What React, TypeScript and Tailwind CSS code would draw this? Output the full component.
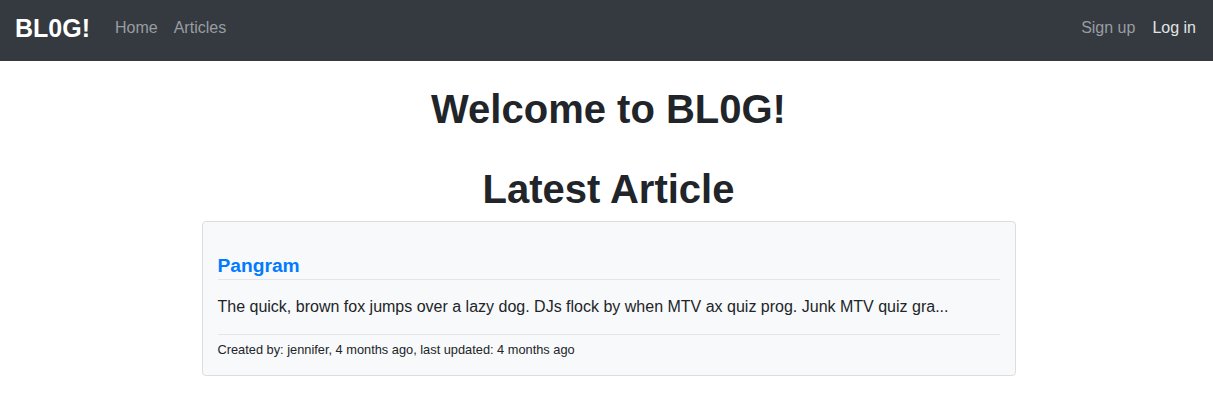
const article = {
  title: "Pangram",
  excerpt:
    "The quick, brown fox jumps over a lazy dog. DJs flock by when MTV ax quiz prog. Junk MTV quiz gra...",
  author: "jennifer",
  created: "4 months ago",
  updated: "4 months ago",
};

const Navbar = () => {
  return (
    <nav className="h-[61px] bg-[#343a40] flex items-center justify-between pl-[15px] pr-[17px] pb-[5px]">
      <div className="flex items-center">
        <a href="#" className="text-white font-bold text-[25px] leading-none mr-[25px]">BL0G!</a>
        <div className="flex items-center gap-4 text-[16px] text-[#9a9da0]">
          <a href="#">Home</a>
          <a href="#">Articles</a>
        </div>
      </div>
      <div className="flex items-center gap-[17px] text-[16px]">
        <a href="#" className="text-[#9a9da0]">Sign up</a>
        <a href="#" className="text-[#e3e4e5]">Log in</a>
      </div>
    </nav>
  );
};

const ArticleCard = () => {
  return (
    <div className="w-[814px] mx-auto bg-[#f8f9fa] border border-[#dcdddf] rounded-[4px] px-[15px] pt-[32px] pb-[16px]">
      <h5 className="text-[19.2px] leading-[24px] font-bold text-[#007bff] pb-[1px] border-b border-[#e4e5e6]">
        <a href="#">{article.title}</a>
      </h5>
      <p className="text-[16px] leading-[24px] mt-[15px] mb-[15px]">{article.excerpt}</p>
      <div className="border-t border-[#e4e5e6] pt-[5px]">
        <small className="text-[12.8px] leading-[19px] block">
          Created by: {article.author}, {article.created}, last updated: {article.updated}
        </small>
      </div>
    </div>
  );
};

export default function App() {
  return (
    <div className="min-h-[409px] bg-white text-[#212529]" style={{ fontFamily: '"Liberation Sans", Arial, sans-serif' }}>
      <Navbar />
      <main className="pt-[24px] pl-[4px]">
        <h1 className="text-[40px] leading-[48px] font-bold text-center mb-[32px]">Welcome to BL0G!</h1>
        <h1 className="text-[40px] leading-[48px] font-bold text-center mb-[8px]">Latest Article</h1>
        <ArticleCard />
      </main>
    </div>
  );
}
